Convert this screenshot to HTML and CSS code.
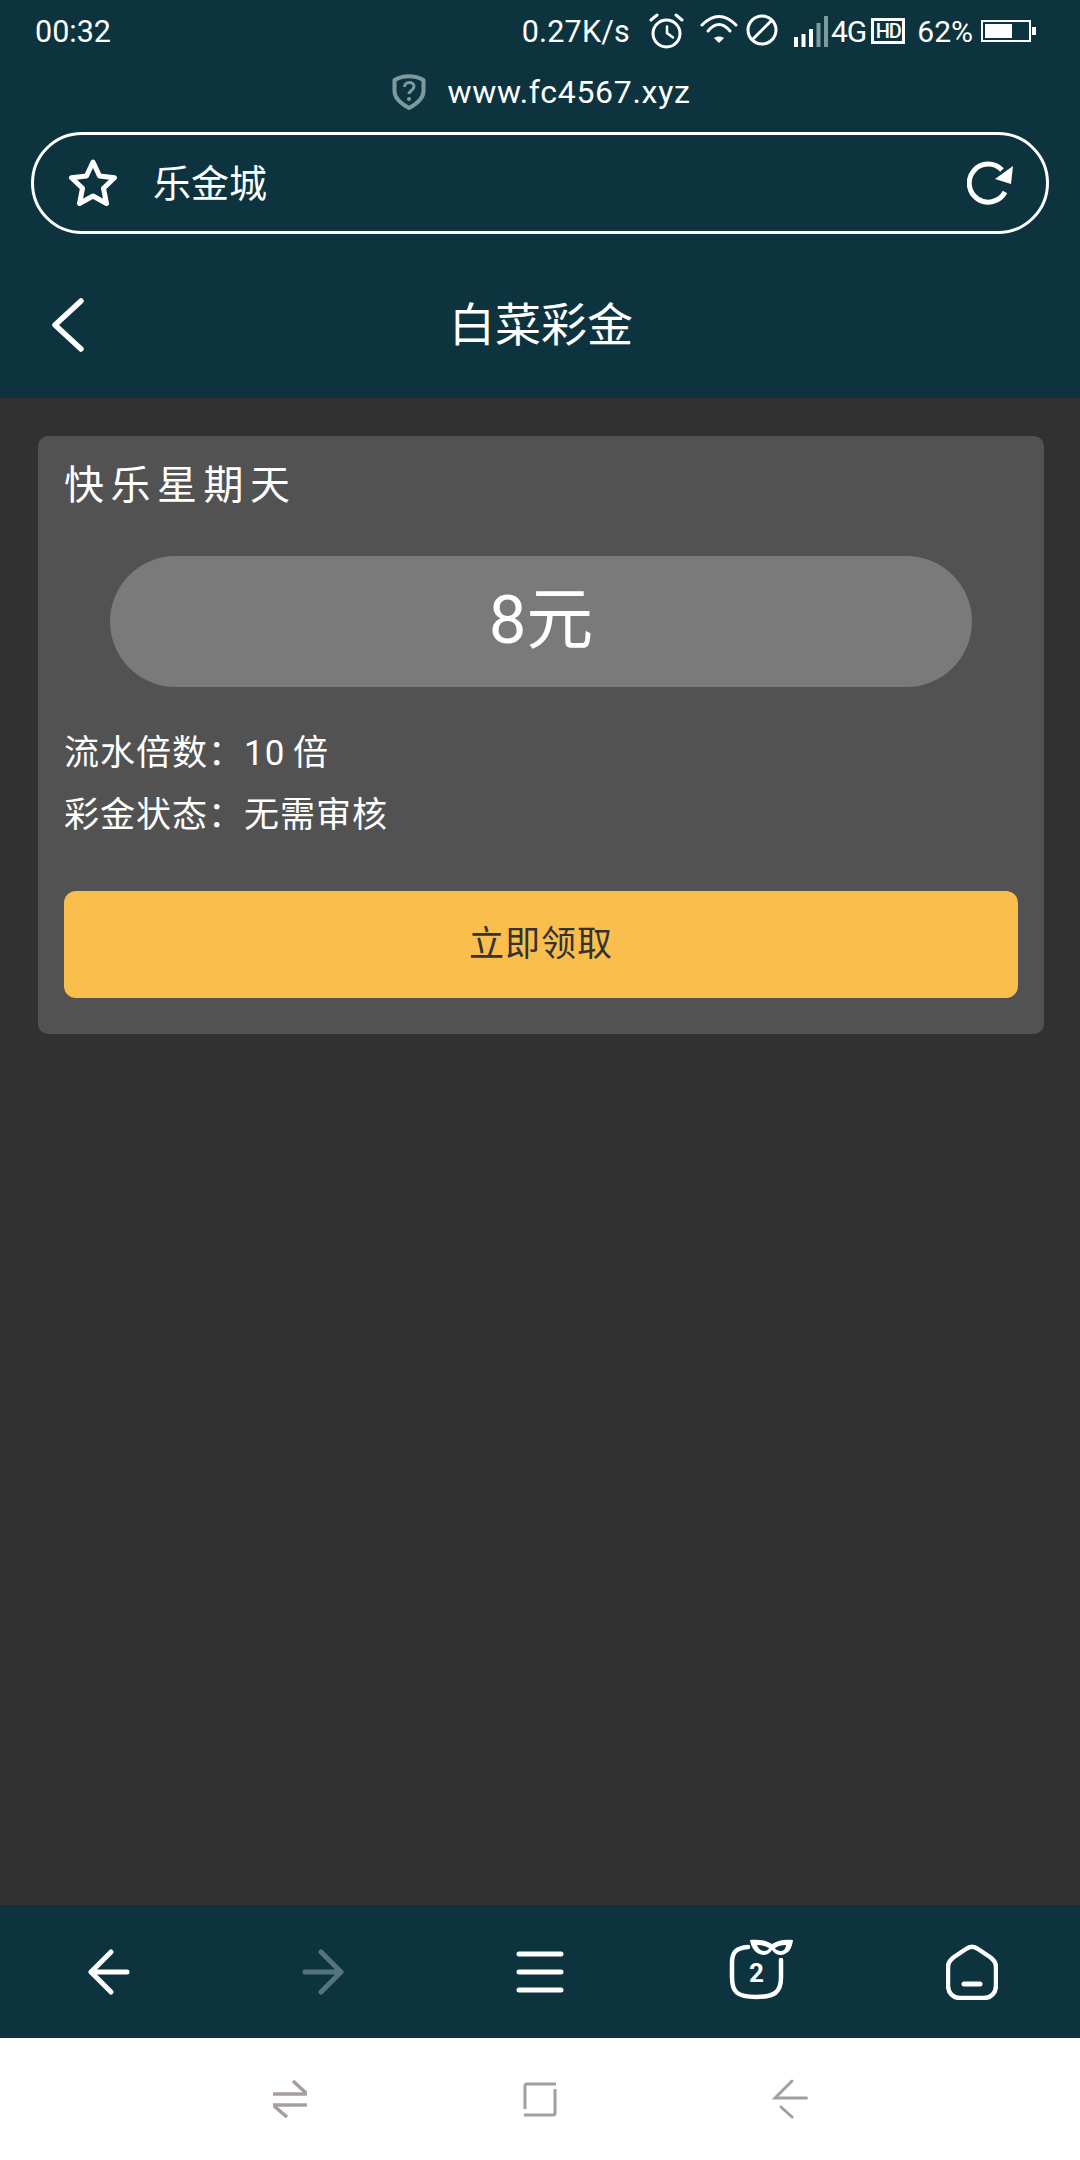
FILE: index.html
```html
<!DOCTYPE html>
<html lang="zh-CN">
<head>
    <meta charset="UTF-8">
    <meta name="viewport" content="width=device-width, initial-scale=1.0">
    <title>白菜彩金</title>
    <link rel="stylesheet" href="styles.css">
</head>
<body>

    <div class="phone">
        <!-- Status bar and browser chrome -->
        <header class="top">
            <div class="status">
                <span class="clock">00:32</span>
                <div class="status-right">
                    <span class="speed">0.27K/s</span>
                    <svg class="ic-alarm" width="36" height="36" viewBox="0 0 36 36" fill="none" stroke="#fff" stroke-width="3" stroke-linecap="round">
                        <circle cx="18.500" cy="20.500" r="13.500"/>
                        <path d="M19 13.500V20l6 4.500" stroke-width="2.500"/>
                        <path d="M3 7l6-5M34 7l-6-5"/>
                    </svg>
                    <svg class="ic-wifi" width="38" height="30" viewBox="0 0 38 30" fill="none" stroke="#fff" stroke-width="3" stroke-linecap="round">
                        <path d="M2 10Q19 -7 36 10"/>
                        <path d="M8 16Q19 3 30 16"/>
                        <path d="M19 28l-5-5c3-2 7-2 10 0z" fill="#fff" stroke="none"/>
                    </svg>
                    <svg class="ic-block" width="32" height="32" viewBox="0 0 32 32" fill="none" stroke="#fff" stroke-width="3">
                        <circle cx="16" cy="16" r="14"/>
                        <path d="M6 26L26 6"/>
                    </svg>
                    <svg class="ic-signal" width="34" height="31" viewBox="0 0 34 31">
                        <rect x="0" y="21" width="4" height="10" fill="#fff"/>
                        <rect x="7.500" y="18" width="4" height="13" fill="#fff"/>
                        <rect x="15" y="13" width="4" height="18" fill="#fff"/>
                        <rect x="22.500" y="7" width="4" height="24" fill="#7f9a9f"/>
                        <rect x="30" y="0" width="4" height="31" fill="#7f9a9f"/>
                    </svg>
                    <span class="net">4G</span>
                    <span class="hd">HD</span>
                    <span class="batt-text">62%</span>
                    <div class="batt"><div class="batt-fill"></div></div>
                    <div class="batt-tip"></div>
                </div>
            </div>

            <div class="url-row">
                <svg width="34" height="36" viewBox="0 0 34 36" fill="none" stroke="#7f9a9f" stroke-width="4" stroke-linejoin="round">
                    <path d="M2.500 6c9-5 20-5 29 0v11c0 8-7 13-14.500 17C9.500 30 2.500 25 2.500 17z"/>
                    <path d="M12.500 13c0-6 9.500-6 9.500-.500 0 4-5 4-5 7.500" stroke-width="3"/>
                    <circle cx="17" cy="25" r="2" fill="#7f9a9f" stroke="none"/>
                </svg>
                <span class="url">www.fc4567.xyz</span>
            </div>

            <div class="search">
                <svg width="50" height="50" viewBox="0 0 50 50" fill="none" stroke="#fff" stroke-width="5" stroke-linejoin="round">
                    <path d="M25 4l6.500 14 15 1.800-11 10.400 3 15.300L25 38l-13.500 7.500 3-15.300-11-10.400 15-1.800z"/>
                </svg>
                <span class="search-text">乐金城</span>
                <svg class="ic-reload" width="46" height="46" viewBox="0 0 46 46" fill="none" stroke="#fff" stroke-width="5">
                    <path d="M38 32a19 19 0 1 1-3-22"/>
                    <path d="M46 6l-2 18-16-5z" fill="#fff" stroke="none"/>
                </svg>
            </div>

            <div class="title-row">
                <svg class="ic-chevron" width="34" height="56" viewBox="0 0 34 56" fill="none" stroke="#fff" stroke-width="5.500" stroke-linecap="round" stroke-linejoin="round">
                    <path d="M31 4L5 28l26 24"/>
                </svg>
                <h1>白菜彩金</h1>
            </div>
        </header>

        <main class="content">
            <div class="card">
                <h2>快乐星期天</h2>
                <div class="amount">8元</div>
                <p>流水倍数：10 倍</p>
                <p>彩金状态：无需审核</p>
                <button class="claim">立即领取</button>
            </div>
        </main>

        <!-- Browser toolbar -->
        <nav class="toolbar">
            <div class="tool">
                <svg width="44" height="46" viewBox="0 0 44 46" fill="none" stroke="#fff" stroke-width="5" stroke-linecap="round" stroke-linejoin="round">
                    <path d="M25 3L5 23l20 20M5 23h36"/>
                </svg>
            </div>
            <div class="tool">
                <svg width="44" height="46" viewBox="0 0 44 46" fill="none" stroke="#56747b" stroke-width="5" stroke-linecap="round" stroke-linejoin="round">
                    <path d="M19 3l20 20-20 20M39 23H3"/>
                </svg>
            </div>
            <div class="tool">
                <svg width="48" height="44" viewBox="0 0 48 44" fill="none" stroke="#fff" stroke-width="5" stroke-linecap="round">
                    <path d="M3 4h42M3 22h42M3 40h42"/>
                </svg>
            </div>
            <div class="tool">
                <div class="tabs">
                    <svg width="64" height="62" viewBox="0 0 64 62" fill="none" stroke="#fff" stroke-width="4.500" stroke-linecap="round">
                        <path d="M19 9C7 10 3 14 3 25v14c0 15 5 20 24 20s25-5 25-20V22"/>
                        <path fill="#fff" fill-rule="evenodd" stroke="none" d="M21 2c8-1 16 0 22 4 6-4 13-5 21-4-1 8-4 14-12 15-4 0-7-2-9-5-2 3-5 5-9 5-8-1-12-8-13-15zM28 7c1 3 4 6 7 6 3 0 5-2 5-3-3-2-7-3-12-3zM46 10c0 1 3 3 6 3 3 0 5-3 5-6-5 0-8 1-11 3z"/>
                    </svg>
                    <span class="tab-count">2</span>
                </div>
            </div>
            <div class="tool">
                <svg width="52" height="56" viewBox="0 0 52 56" fill="none" stroke="#fff" stroke-width="4.500" stroke-linecap="round" stroke-linejoin="round">
                    <path d="M20 5c4-3 8-3 12 0l12 8c4 3 6 6 6 10v18c0 8-5 13-12 13H14C7 54 2 49 2 41V23c0-4 2-7 6-10z"/>
                    <path d="M18 40h16" stroke-width="5"/>
                </svg>
            </div>
        </nav>

        <!-- Android nav keys -->
        <div class="keys">
            <svg width="36" height="38" viewBox="0 0 36 38" fill="none" stroke="#a69e9e" stroke-width="3.500">
                <path d="M35 14H1M35 25H1"/>
                <path d="M21 1l13 12M2 26l13 11"/>
            </svg>
            <svg width="34" height="36" viewBox="0 0 34 36" fill="none" stroke="#a69e9e" stroke-width="3">
                <path d="M33 3H4a2 2 0 0 0-2 2v23"/>
                <path d="M32 8v24a2 2 0 0 1-2 2H1"/>
            </svg>
            <svg width="36" height="40" viewBox="0 0 36 40" fill="none" stroke="#a69e9e" stroke-width="3" stroke-linecap="round">
                <path d="M34.500 19H3L20 2"/>
                <path d="M9 28l11 10"/>
            </svg>
        </div>
    </div>

</body>
</html>
```

FILE: styles.css
```css
* {
    box-sizing: border-box;
}

body {
    margin: 0;
    background-color: #313131;
    color: #fff;
    font-family: Roboto, "Noto Sans CJK SC", sans-serif;
}

.phone {
    width: 1080px;
    height: 2160px;
    display: flex;
    flex-direction: column;
}

/* Status bar and address bar */
.top {
    height: 398px;
    background-color: #0d343e;
    padding: 0 31px;
}

.status {
    height: 62px;
    display: flex;
    justify-content: space-between;
    align-items: center;
    font-size: 30.5px;
    margin-right: 13px;
}

.clock {
    margin-left: 4px;
}

.status-right {
    display: flex;
    align-items: center;
}

.speed {
    letter-spacing: 0.2px;
}

.ic-alarm {
    margin-left: 18px;
}

.ic-wifi {
    margin-left: 16px;
    margin-top: -2px;
}

.ic-block {
    margin-left: 8px;
    margin-top: -3px;
}

.ic-signal {
    margin-left: 16px;
}

.net {
    margin-left: 3px;
    font-size: 30px;
    letter-spacing: -1px;
}

.hd {
    margin-left: 5px;
    width: 34px;
    height: 26px;
    border: 3px solid #fff;
    font-size: 20px;
    font-weight: 500;
    line-height: 20px;
    text-align: center;
    letter-spacing: -1px;
}

.batt-text {
    margin-left: 12px;
    font-size: 30px;
}

.batt {
    margin-left: 8px;
    width: 50px;
    height: 22px;
    border: 2px solid #fff;
    padding: 2px;
}

.batt-fill {
    width: 27px;
    height: 100%;
    background-color: #fff;
}

.batt-tip {
    margin-left: 1px;
    width: 4px;
    height: 8px;
    background-color: #fff;
}

.url-row {
    height: 60px;
    padding-left: 3px;
    display: flex;
    justify-content: center;
    align-items: center;
    gap: 21px;
}

.url {
    font-size: 32px;
    letter-spacing: 0.7px;
}

.search {
    height: 102px;
    margin-top: 10px;
    width: 1018px;
    border: 3px solid #fff;
    border-radius: 51px;
    display: flex;
    align-items: center;
    padding: 0 33px 0 34px;
}

.search-text {
    margin: 0 0 5px 35px;
    font-size: 38px;
}

.ic-reload {
    margin-left: auto;
}

.title-row {
    position: relative;
    height: 164px;
    padding: 10px 0 0 2px;
    display: flex;
    align-items: center;
    justify-content: center;
}

.ic-chevron {
    position: absolute;
    left: 19px;
    top: 63px;
}

h1 {
    margin: 0;
    font-size: 46px;
    font-weight: 400;
}

/* Page body */
.content {
    flex: 1;
    padding: 38px 36px 0 38px;
}

.card {
    height: 598px;
    background-color: #525252;
    border-radius: 10px;
    padding: 0 26px;
}

h2 {
    margin: 0;
    padding-top: 25px;
    font-size: 40px;
    line-height: 50px;
    font-weight: 400;
    letter-spacing: 6.5px;
}

.amount {
    height: 131px;
    margin: 45px 46px 36px 46px;
    border-radius: 66px;
    background-color: #7a7a7a;
    font-size: 67px;
    line-height: 129px;
    text-align: center;
}

.card p {
    margin: 0;
    font-size: 35px;
    line-height: 62px;
    letter-spacing: 1px;
    word-spacing: -2px;
}

.claim {
    display: block;
    width: 100%;
    height: 107px;
    margin-top: 44px;
    padding: 0 0 9px;
    border: none;
    border-radius: 12px;
    background-color: #fabe4d;
    color: #333;
    font-family: inherit;
    font-size: 35px;
    letter-spacing: 1px;
}

/* Bottom toolbar */
.toolbar {
    height: 133px;
    background-color: #0d343e;
    display: grid;
    grid-template-columns: repeat(5, 216px);
}

.tool {
    display: flex;
    align-items: center;
    justify-content: center;
}

.tabs {
    position: relative;
    width: 64px;
    height: 62px;
    margin-bottom: 5px;
    margin-left: 10px;
}

.tab-count {
    position: absolute;
    left: 20px;
    top: 20px;
    font-size: 26px;
    font-weight: 700;
    line-height: 30px;
}

.keys {
    height: 122px;
    background-color: #fff;
    display: flex;
    justify-content: center;
    align-items: center;
    gap: 215px;
}
```
